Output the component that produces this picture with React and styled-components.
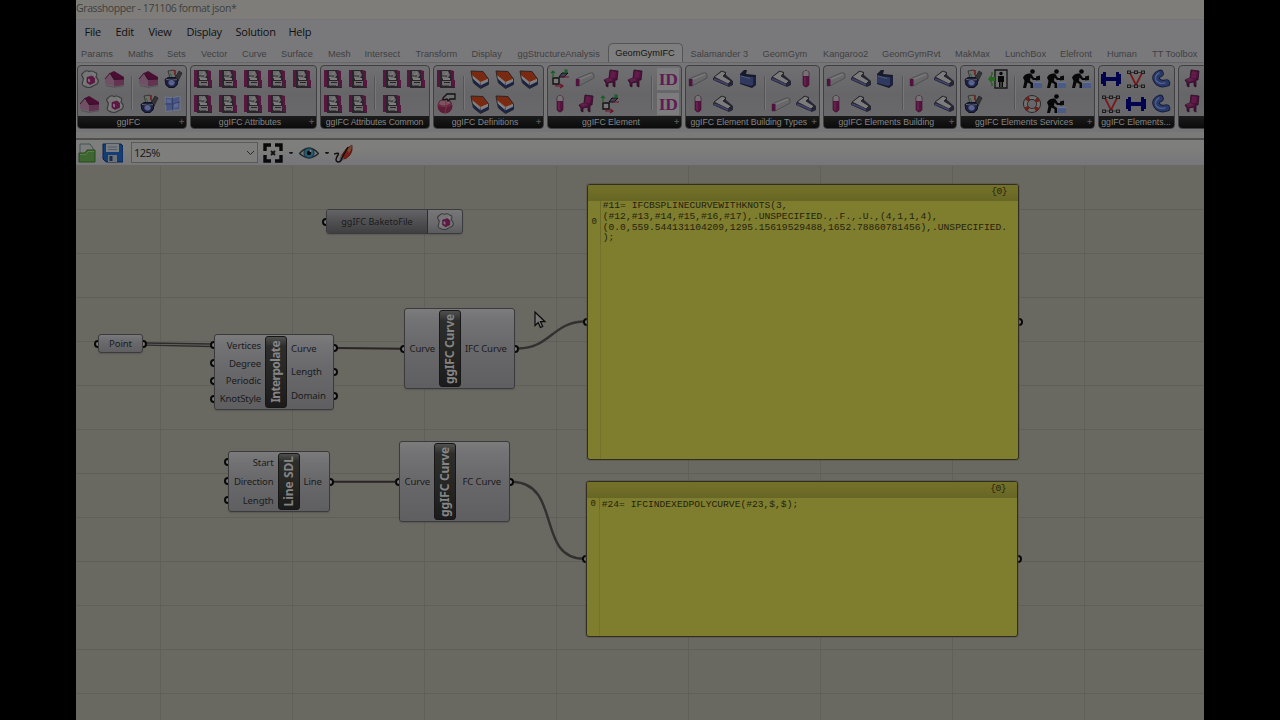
import React from "react";
import styled, { createGlobalStyle } from "styled-components";

const GlobalStyle = createGlobalStyle`
  * { box-sizing: border-box; }
  html, body { margin: 0; padding: 0; background: #000; }
  body { width: 1280px; height: 720px; overflow: hidden; }
`;

/* ---------- window chrome ---------- */
const Screen = styled.div`
  width: 1280px; height: 720px; background: #000; display: flex; justify-content: center; overflow: hidden;
`;
const Window = styled.div`
  width: 1128px; height: 720px; display: flex; flex-direction: column; overflow: hidden; background: #78787a;
`;
const TitleBar = styled.div`
  height: 20px; flex: none; background: #7e7d79; border-bottom: 1px solid #747477; color: #3f3f3f;
  font: 10.5px/17px "Open Sans", sans-serif; letter-spacing: -0.4px; white-space: nowrap;
`;
const MenuBar = styled.div`
  height: 23px; flex: none; display: flex; align-items: center; padding-left: 8.5px; background: #79797b;
`;
const MenuItem = styled.span`
  width: ${(p) => p.$w}px; flex: none; white-space: nowrap; color: #101010;
  font: 11px/21px "Open Sans", sans-serif; letter-spacing: -0.25px;
`;
const TabStrip = styled.div`
  height: 20px; flex: none; display: flex; align-items: stretch; padding-left: 5px; background: #79797b;
  white-space: nowrap; overflow: hidden; border-bottom: 1px solid #676769;
`;
const Tab = styled.span`
  width: ${(p) => p.$w}px; flex: none; color: #404042; font: 9.25px/22px "Liberation Sans", sans-serif;
`;
const ActiveTab = styled.span`
  width: 75px; flex: none; margin-right: 8px; text-align: center; color: #141414; background: #7e7e7e;
  border: 1px solid #555557; border-bottom: 0; border-radius: 5px 5px 0 0;
  font: 9.25px/18px "Liberation Sans", sans-serif;
`;
const Ribbon = styled.div`
  height: 69px; flex: none; display: flex; align-items: flex-start; gap: 3px; padding: 2px 0 0 1px;
  background: #757577; overflow: hidden;
`;
const Group = styled.section`
  width: ${(p) => p.$w}px; height: 64px; flex: none; display: flex; flex-direction: column; overflow: hidden;
  border: 1px solid #3f3f41; border-radius: 4px; background: linear-gradient(#707072, #666668 45%, #6b6b6d);
  box-shadow: 0 0 0 1px #7c7c7e66;
`;
const GroupBody = styled.div`
  flex: 1; display: flex; padding-top: 1px;
`;
const IconGrid = styled.div`
  display: grid; grid-template-columns: repeat(${(p) => p.$cols}, 24.7px); grid-template-rows: 24.5px 24.5px;
  place-items: center; flex: none;
`;
const Divider = styled.i`
  width: 1px; height: 34px; margin: 9px 4px 0; flex: none; background: #555558; box-shadow: 1px 0 #777779;
`;
const GroupLabel = styled.div`
  height: 12px; flex: none; display: flex; align-items: center; padding-right: 1px; background: linear-gradient(#1c1c1c, #0b0b0b);
  color: #858585; font: 8.7px/11px "Liberation Sans", sans-serif; white-space: nowrap;
`;
const LabelText = styled.span`
  flex: 1; text-align: center; letter-spacing: ${(p) => p.$ls || 0}px;
`;
const Plus = styled.span`
  flex: none; color: #555; font-weight: bold; font-size: 9px; width: 6px;
`;
const RibbonFoot = styled.div`
  height: 8px; flex: none; background: #7a7a79; border-bottom: 2px solid #505050;
`;
const ToolBar = styled.div`
  height: 26px; flex: none; display: flex; align-items: center; background: linear-gradient(#7e7e7c 35%, #79797b 75%, #777779);
  border-bottom: 1px solid #696864;
`;
const Tool = styled.span`
  width: ${(p) => p.$w}px; height: 20px; flex: none; display: flex; align-items: center; margin-left: ${(p) => p.$ml || 0}px;
`;
const Zoom = styled.div`
  width: 127px; height: 21px; margin-left: 8px; flex: none; display: flex; align-items: center; justify-content: space-between;
  padding: 0 2px; border: 1px solid #5a5a5a; background: #7e7e7d; color: #151515;
  font: 11px/18px "Open Sans", sans-serif; letter-spacing: -0.5px;
`;
const Dot = styled.i`
  width: 4px; height: 2px; margin-left: ${(p) => p.$ml}px; flex: none; background: #151515; border-radius: 0 0 2px 2px;
`;

/* ---------- canvas ---------- */
const Canvas = styled.main`
  position: relative; flex: 1; overflow: hidden; background-color: #696962;
  background-image: linear-gradient(90deg, #605f59 1px, transparent 1px), linear-gradient(#625f5a 1px, transparent 1px);
  background-size: 132px 132px, 132px 44px; background-position: 84px 0, 0 43px;
`;
const Wires = styled.svg`
  position: absolute; left: 0; top: 0; width: 1128px; height: 554px; pointer-events: none;
`;
const Placed = styled.div`
  position: absolute; left: ${(p) => p.$x}px; top: ${(p) => p.$y}px; width: ${(p) => p.$w}px; height: ${(p) => p.$h}px;
`;
const Port = styled.i`
  position: absolute; ${(p) => (p.$side === "in" ? "left: -4px" : "right: -4px")}; top: ${(p) => p.$y - 4}px;
  width: 8px; height: 8px; border: 2px solid #080808; border-radius: 50%; background: #7c7c7c;
`;
const Body = styled.div`
  position: relative; width: 100%; height: 100%; display: flex; border: 1px solid #3b3a3d; border-radius: 3px;
  padding: 1px; background: linear-gradient(#7c7c7c, #747477 12%, #69696c 45%, #5f5f62);
  box-shadow: 0 1px 1px #45444066; color: #1b1b1b; font: 9.6px/12px "Noto Sans", "Open Sans", sans-serif;
`;
const PortLabels = styled.div`
  width: ${(p) => p.$w}px; flex: none; display: flex; flex-direction: column; justify-content: space-around;
  align-items: ${(p) => (p.$out ? "flex-start" : "flex-end")}; padding: 1px 4px 0 ${(p) => p.$inset || 4}px; white-space: nowrap;
  letter-spacing: -0.15px;
`;
const NameBar = styled.div`
  width: 22px; flex: none; display: flex; align-items: center; justify-content: center; overflow: hidden;
  border: 1px solid #171717; border-radius: 3px; background: linear-gradient(#50504e, #2d2d2c 13%, #252524 60%, #1b1b1b);
  color: #858585;
`;
const NameText = styled.span`
  writing-mode: vertical-rl; transform: rotate(180deg); white-space: nowrap; letter-spacing: ${(p) => p.$ls || 0}px;
  font: bold 12px/18px "Noto Sans", "Open Sans", sans-serif;
`;
const Caption = styled.span`
  flex: 1; align-self: center; text-align: center; letter-spacing: -0.1px;
`;
const BakeBody = styled(Body)`
  padding: 0; overflow: hidden; background: linear-gradient(#77777a, #6a6a6d 60%, #5b5b5e);
`;
const BakeName = styled.div`
  width: 101px; flex: none; border-right: 1px solid #2c2c2e; background: linear-gradient(#646466, #525255 45%, #3f3f42);
  text-align: center; font-size: 9.1px; line-height: 23px;
`;
const BakeIcon = styled.div`
  flex: 1; display: flex; align-items: center; justify-content: center;
`;
const Note = styled.article`
  position: relative; width: 100%; height: 100%; display: flex; flex-direction: column;
  border: 1px solid #302e22; border-radius: 3px; background: #7f7d2e; box-shadow: 0 0 0 1px #4c4b3b66;
  font: 9.63px/10.75px "Liberation Mono", monospace; color: #24230d;
`;
const NoteHead = styled.header`
  height: 16px; flex: none; background: linear-gradient(#747229, #686625); text-align: right; padding: 1px 11px 0 0; line-height: 12px;
  letter-spacing: -0.5px; border-radius: 2px 2px 0 0;
`;
const NoteRow = styled.div`
  display: flex; padding-left: 3.5px;
`;
const Gutter = styled.span`
  width: 9.5px; flex: none; display: flex; align-items: center; border-right: 1px solid #6c6a29;
  font-size: 9px;
`;
const Data = styled.pre`
  margin: 0; padding: ${(p) => p.$pad}px 0 0 1.8px; font: inherit;
`;
const NoteRest = styled.div`
  flex: 1; margin-left: 12px; border-left: 1px solid #74722b;
`;
const Pointer = styled.svg`
  position: absolute; left: 458px; top: 145px; width: 12px; height: 18px;
`;

/* ---------- icons ---------- */
const P = "#551640";
const art = {
  egg: (
    <>
      <path d="M3 4Q6 .5 9 2.500Q12 1 15 3.500Q18 4 16 8Q20 12 17 15Q15 16 13 17Q9 20 4 17Q1 16 3 12Q4 9 2 7Q1 5 3 4Z" fill="#767677" stroke="#3a3a3c" strokeWidth="1.100" />
      <path d="M5 15q-1-3 1-6M13 4q2 2 1 4" stroke="#848485" fill="none" />
      <path d="M7 8.500l5-1.500 2.500 2v4.500L10 15.500l-3-2z" fill="#5f1843" stroke="#4b1238" strokeWidth=".7" />
      <path d="M8 9.500l2 1v3l-2-1z" fill="#856a7e" />
    </>
  ),
  house: (
    <>
      <path d="M0 10L5 4 9 10v7L0 15z" fill="#705065" />
      <path d="M5 4l4-2 10 6v3l-10 0z" fill="#4a0e32" />
      <path d="M9 10.500L19 10v6L9 17.500z" fill="#633451" />
      <path d="M0 10l5-6 4 6.500 10-.5" stroke="#350b27" strokeWidth=".9" fill="none" />
      <path d="M1 16.500l8 1.800 10-1.500" stroke="#4c4c4e" strokeWidth=".8" fill="none" />
    </>
  ),
  pot: (
    <>
      <path d="M5 2l6-1 2 8H7z" fill="#6c6c6c" stroke="#292929" strokeWidth=".8" />
      <path d="M12 9l4-7 3 2-4 8z" fill="#333438" stroke="#222" strokeWidth=".8" />
      <path d="M12 6V1" stroke="#7c2020" strokeWidth="1.600" />
      <path d="M7 4l2 4" stroke="#2d6a2c" strokeWidth="1" />
      <path d="M2 10.500L5 8.500h7l3 2.500-1 5-3 2.500H6L3 16z" fill="#1d2043" stroke="#10121f" strokeWidth="1" />
      <path d="M5.500 12.500l3-1.500 3.500 2-1 3-3 .8-2.500-1.800z" fill="#56628f" />
      <path d="M3 10.300q5 1.700 11 .3" stroke="#777" strokeWidth=".8" fill="none" />
    </>
  ),
  glass: (
    <>
      <path d="M2 3q8 2 15-1v14q-7-1-14 2z" fill="#4a5680" stroke="#6f7690" strokeWidth="1" />
      <path d="M9.500 3.500v13M2 10q8 1 15-2" stroke="#34406c" strokeWidth="1" fill="none" />
      <path d="M4 5l4 1v3l-4-.5zM11 10l4-1v4l-4 1z" fill="#5d6b92" />
    </>
  ),
  doc: (
    <>
      <path d="M1 1h6v17H1z" fill={P} />
      <path d="M5 1h10l2 4v6h2v8H4V1z" fill="#29252a" />
      <path d="M6 2h6l2 4-2 3H6z" fill="#6b6b6c" />
      <path d="M6 8l5-5 1 1-5 6zM7 9h7v2H7z" fill="#7d7d7d" />
      <path d="M14 1l4 1v9h-2z" fill={P} />
      <path d="M6 12h9v5H8l-2-1z" fill="#6c6c6d" />
      <path d="M8 13.500h6M8 17h5M6 7h5" stroke="#262626" strokeWidth="1" />
      <path d="M15 11h4v7h-3z" fill={P} />
    </>
  ),
  sphere: (
    <>
      <circle cx="9" cy="12" r="7.500" fill="#5c1d38" />
      <path d="M2.500 10q2.500-5 7.500-5l5 4q-6 5-12.500 1z" fill="#7b5465" />
      <path d="M2 11q7 4 14-1M9 5q3 7 0 14" stroke="#743540" fill="none" />
      <path d="M7 4l4-4h8v5h-5l-2 2-1-2-4 1z" fill="#6c6c6c" stroke="#121212" strokeWidth="1.300" />
    </>
  ),
  wedge: (
    <>
      <path d="M1 2L13 2.500 18.500 10 10 13.500 2 7z" fill="#7a2a10" />
      <path d="M2 6l8.500 7 8-3.500v3l-8 4L2.500 10z" fill="#808080" />
      <path d="M2.500 9.500l8 7 8-4v3L10.500 19.500 3.500 14z" fill="#16234a" />
      <path d="M1 2L13 2.500 18.500 10v5.500l-8 4-7-5.500L2 8z" fill="none" stroke="#272024" strokeWidth=".9" />
      <path d="M10.300 13.500v5.500" stroke="#3c2830" strokeWidth=".7" />
    </>
  ),
  frame: (
    <>
      <path d="M3 9h6v6H3z" fill="#777" stroke="#111" strokeWidth="1.400" />
      <path d="M9 8l3-4h6l-4 4z" fill="#3c4258" stroke="#111" />
      <path d="M3 9V2M1 4l2-2 2 2M14 4l3-3M14 1h3v3" stroke="#195e25" strokeWidth="1.200" fill="none" />
      <path d="M12 8h7M6 15v2h6M10 15l3 2-3 2" stroke="#6b1228" strokeWidth="1.200" fill="none" />
    </>
  ),
  beam: (
    <>
      <path d="M1 10L15 4q4-1 4 2v3L4 17H1z" fill="#68686a" stroke="#4a4a4c" strokeWidth=".8" />
      <path d="M4 10.500L17 5.200" stroke="#79797a" strokeWidth="1.600" />
      <path d="M1 10h3.500v7H1z" fill="#521240" />
    </>
  ),
  column: (
    <>
      <path d="M7 3q3-3 6 0v13q-3 4-6 0z" fill="#571240" stroke="#3e1730" strokeWidth=".7" />
      <path d="M7.300 3q2.700-2.500 5.400 0v4H7.300z" fill="#747475" />
      <path d="M9 8v8" stroke="#702a55" strokeWidth="1.200" />
    </>
  ),
  chair: (
    <>
      <path d="M10 1l8 1-1 9h-2v7l-2-1v-4l-5 1v4l-2-1v-3l-2-3 5-2z" fill="#4d123b" stroke="#2b0c23" strokeWidth=".8" />
      <path d="M11 2l5 1-1 6h-5z" fill="#611a4a" />
      <path d="M4.500 10l5-1 4 2-6 2z" fill="#5e2149" />
    </>
  ),
  slab: (
    <>
      <path d="M0 9L8 2l5 1v3l7 6v4l-4 2-7-3-9-4z" fill="#242638" />
      <path d="M1 8l8-6 4 2-3 3 8 5-3 3-6-3z" fill="#7c7c7c" stroke="#222" strokeWidth=".9" />
      <path d="M1 10l8 3 6 3" stroke="#43436c" strokeWidth="1.500" fill="none" />
    </>
  ),
  wall: (
    <>
      <path d="M2 5l4-4h3l-1 4 10 1v10L14 19 2 15z" fill="#171a28" />
      <path d="M2 6l5 1.500 8 .5v8L13 17 2 14z" fill="#303960" />
      <path d="M15 8l3-1v9l-3 1z" fill="#1b2140" />
      <path d="M3 7l9 2.500" stroke="#505a7b" />
    </>
  ),
  exit: (
    <>
      <path d="M7 1h12v18H7z" fill="#6f6f6f" stroke="#151515" strokeWidth="1.300" />
      <circle cx="13" cy="4.500" r="1.700" fill="#080808" />
      <path d="M10 7h6v6h-1v5h-1.500v-5h-1v5H11v-5h-1z" fill="#080808" />
      <path d="M0 10l4-5v3h3v4H4v3z" fill="#266820" />
      <path d="M4 3v3M4 14v3" stroke="#266820" strokeWidth="1.500" />
    </>
  ),
  worker: (
    <>
      <circle cx="10.500" cy="2.500" r="2.300" fill="#050505" />
      <path d="M1 8.500Q3 4 9 4.500L12 9h4v2h-5L8.500 8.500 8 12l3 2v5H8.500v-4L5.500 13.500 4 19H1l1.500-7z" fill="#080808" />
      <path d="M12 13h8v6h-9v-3h1z" fill="#4b5b83" />
      <path d="M14 7.500l4-1V11l-4 .5z" fill="#0b0b0b" />
      <path d="M12 13.500h8" stroke="#68769a" />
    </>
  ),
  buoy: (
    <>
      <circle cx="10" cy="10" r="6.500" fill="none" stroke="#262626" strokeWidth="5" />
      <circle cx="10" cy="10" r="6.500" fill="none" stroke="#707070" strokeWidth="3.200" />
      <circle cx="10" cy="10" r="6.500" fill="none" stroke="#6c2019" strokeWidth="4" strokeDasharray="3.500 6.710" strokeDashoffset="-3.350" />
    </>
  ),
  dumbbell: <path d="M0 5h2V3h3v5h10V3h3v2h2v10h-2v2h-3v-5H5v5H2v-2H0z" fill="#02034f" />,
  truss: (
    <>
      <path d="M3 3.500h14M4 17h13" stroke="#333" strokeWidth="1" />
      <path d="M4 4l6 12 6-12" stroke="#7b1719" strokeWidth="1.700" fill="none" />
      {[[3, 2], [10, 2], [17, 2], [3, 16], [10, 16], [17, 16]].map(([x, y]) => (
        <rect key={`${x}-${y}`} x={x - 1.5} y={y} width="3" height="2.500" fill="#666" stroke="#1c1c1c" strokeWidth="1" />
      ))}
    </>
  ),
  elbow: (
    <>
      <path d="M9 4.500Q3 7 6 11.500 9 16 15.500 14" stroke="#101a3a" strokeWidth="7.500" strokeLinecap="round" fill="none" />
      <path d="M9 4.500Q3 7 6 11.500 9 16 15.500 14" stroke="#293866" strokeWidth="5.800" strokeLinecap="round" fill="none" />
      <path d="M8 4Q3 7 5 11.500 8 15.500 14 14" stroke="#4c5c86" strokeWidth="1.500" strokeLinecap="round" fill="none" />
    </>
  ),
};

const IdBadge = styled.span`
  width: 22px; height: 22px; display: flex; align-items: center; justify-content: center; background: #7c7c7d;
  color: #5f1c55; font: bold 17.500px/22px "Liberation Serif", serif; letter-spacing: -0.4px;
`;
const IconSvg = styled.svg`
  width: ${(p) => p.$size}px; height: ${(p) => p.$size}px; overflow: visible;
`;
const Glyph = ({ name, size = 20 }) =>
  name === "id" ? <IdBadge>ID</IdBadge> : <IconSvg $size={size} viewBox="0 0 20 20">{art[name]}</IconSvg>;

const menu = [["File", 31], ["Edit", 33], ["View", 38], ["Display", 49], ["Solution", 53], ["Help", 40]];
const tabsBefore = [
  ["Params", 47], ["Maths", 39], ["Sets", 34], ["Vector", 41], ["Curve", 39], ["Surface", 47], ["Mesh", 36.5],
  ["Intersect", 51], ["Transform", 56], ["Display", 46], ["ggStructureAnalysis", 90],
];
const tabsAfter = [
  ["Salamander 3", 72], ["GeomGym", 60.5], ["Kangaroo2", 59], ["GeomGymRvt", 73], ["MakMax", 50], ["LunchBox", 55],
  ["Elefront", 47], ["Human", 45], ["TT Toolbox", 52],
];
const fill = (n, name) => Array(n).fill(name);
const groups = [
  { w: 110, label: "ggIFC", plus: true, sets: [[2, ["egg", "house", "house", "egg"]], [2, ["house", "pot", "pot", "glass"]]] },
  { w: 127, label: "ggIFC Attributes", plus: true, sets: [[5, fill(9, "doc")]] },
  { w: 110, label: "ggIFC Attributes Common", spacing: -0.1, sets: [[2, fill(4, "doc")], [2, fill(3, "doc")]] },
  { w: 111, label: "ggIFC Definitions", plus: true, sets: [[1, ["doc", "sphere"]], [3, fill(5, "wedge")]] },
  { w: 135, label: "ggIFC Element", plus: true, sets: [[4, ["frame", "beam", "chair", "chair", "column", "chair", "frame"]], [1, ["id", "id"]]] },
  { w: 134.5, label: "ggIFC Element Building Types", plus: true, sets: [[3, ["beam", "slab", "wall", "column", "slab"]], [2, ["slab", "column", "beam", "slab"]]] },
  { w: 134.5, label: "ggIFC Elements Building", plus: true, sets: [[3, ["beam", "slab", "wall", "column", "slab"]], [2, ["beam", "slab", "column", "slab"]]] },
  { w: 135, label: "ggIFC Elements Services", plus: true, sets: [[2, ["pot", "exit", "pot"]], [3, ["worker", "worker", "worker", "buoy", "worker"]]] },
  { w: 77, label: "ggIFC Elements...", sets: [[3, ["dumbbell", "truss", "elbow", "truss", "dumbbell", "elbow"]]] },
  { w: 77, label: "", sets: [[1, ["chair", "chair"]]] },
];

function RibbonGroup({ w, label, spacing, plus, sets }) {
  return (
    <Group $w={w}>
      <GroupBody>
        {sets.map(([cols, icons], i) => (
          <React.Fragment key={i}>
            {i > 0 && <Divider />}
            <IconGrid $cols={cols}>{icons.map((name, k) => <Glyph key={k} name={name} />)}</IconGrid>
          </React.Fragment>
        ))}
      </GroupBody>
      <GroupLabel><LabelText $ls={spacing}>{label}</LabelText>{plus && <Plus>+</Plus>}</GroupLabel>
    </Group>
  );
}

function Component({ x, y, w, h, inputs, inPorts, outputs, outPorts, name, nameSpacing, inW, outW, outInset }) {
  return (
    <Placed $x={x} $y={y} $w={w} $h={h}>
      {inPorts.map((p) => <Port key={p} $side="in" $y={p} />)}
      {outPorts.map((p) => <Port key={p} $side="out" $y={p} />)}
      <Body>
        <PortLabels $w={inW}>{inputs.map((t) => <span key={t}>{t}</span>)}</PortLabels>
        <NameBar><NameText $ls={nameSpacing}>{name}</NameText></NameBar>
        <PortLabels $out $w={outW} $inset={outInset}>{outputs.map((t) => <span key={t}>{t}</span>)}</PortLabels>
      </Body>
    </Placed>
  );
}

function DataNote({ x, y, w, h, lines, portY, pad = 0 }) {
  return (
    <Placed $x={x} $y={y} $w={w} $h={h}>
      <Port $side="in" $y={portY} />
      <Port $side="out" $y={portY} />
      <Note>
        <NoteHead>{"{0}"}</NoteHead>
        <NoteRow>
          <Gutter>0</Gutter>
          <Data $pad={pad}>{lines.join("\n")}</Data>
        </NoteRow>
        <NoteRest />
      </Note>
    </Placed>
  );
}

export default function App() {
  return (
    <Screen>
      <GlobalStyle />
      <Window>
        <TitleBar>Grasshopper - 171106 format json*</TitleBar>
        <MenuBar>{menu.map(([t, w]) => <MenuItem key={t} $w={w}>{t}</MenuItem>)}</MenuBar>
        <TabStrip>
          {tabsBefore.map(([t, w]) => <Tab key={t} $w={w}>{t}</Tab>)}
          <ActiveTab>GeomGymIFC</ActiveTab>
          {tabsAfter.map(([t, w]) => <Tab key={t} $w={w}>{t}</Tab>)}
        </TabStrip>
        <Ribbon>{groups.map((g, i) => <RibbonGroup key={i} {...g} />)}</Ribbon>
        <RibbonFoot />
        <ToolBar>
          <Tool $w={18} $ml={2}>
            <svg width="18" height="20" viewBox="0 0 18 20">
              <path d="M2 1h10l3 4v6H2z" fill="#7d7d7d" stroke="#3f5555" />
              <path d="M1 10h6l2-3h8v12H1z" fill="#3d6630" stroke="#264a1d" />
              <path d="M2 11.500h6l2-3h6" stroke="#5a7d47" fill="none" />
            </svg>
          </Tool>
          <Tool $w={21} $ml={6}>
            <svg width="21" height="20" viewBox="0 0 21 20">
              <path d="M1 1h18l2 2v16H4l-3-3z" fill="#143c75" stroke="#0a254d" />
              <path d="M4 1h13v8H4z" fill="#7a7d80" />
              <path d="M6 4h9M6 6.500h9" stroke="#555c64" />
              <path d="M6 12h9v7H6z" fill="#6f7275" /><path d="M7.500 13h3v5h-3z" fill="#182d4c" />
            </svg>
          </Tool>
          <Zoom>
            125%
            <svg width="9" height="6" viewBox="0 0 9 6"><path d="M1 1l3.500 3.500L8 1" fill="none" stroke="#292929" strokeWidth="1" /></svg>
          </Zoom>
          <Tool $w={20} $ml={5}>
            <svg width="20" height="20" viewBox="0 0 20 20">
              <path d="M8 2H2v6M12 2h6v6M8 18H2v-6M12 18h6v-6" fill="none" stroke="#090909" strokeWidth="3.400" />
              <path d="M8 8l4 4m0-4l-4 4" stroke="#111" strokeWidth="1.800" />
            </svg>
          </Tool>
          <Dot $ml={6} />
          <Tool $w={20} $ml={5.5}>
            <svg width="20" height="16" viewBox="0 0 20 16">
              <path d="M.5 8.500Q10-2 19.500 8.500 10 17 .5 8.500z" fill="#757575" stroke="#1b2629" strokeWidth="1.300" />
              <circle cx="10" cy="8" r="5" fill="#285b70" stroke="#173541" /><circle cx="10" cy="8" r="2.200" fill="#070b0d" />
              <circle cx="11.500" cy="6" r="1" fill="#858585" />
            </svg>
          </Tool>
          <Dot $ml={6} />
          <Tool $w={20} $ml={5}>
            <svg width="20" height="20" viewBox="0 0 20 20">
              <path d="M7 13L12 6 18 2q1 6-2 10-4 5-8 4z" fill="#7a1d16" stroke="#35120f" strokeWidth=".6" />
              <path d="M13 7l5-5q0 4-3 8z" fill="#7b4a2e" />
              <path d="M7 12l3 3-2 3-3-2z" fill="#555" />
              <path d="M0 11q6-2 4 1-4 6 0 7 3 0 4-4L14 4" stroke="#151010" strokeWidth="1.500" fill="none" />
            </svg>
          </Tool>
        </ToolBar>
        <Canvas>
          <Wires viewBox="76 166 1128 554" fill="none">
            <path d="M146 343L212 344M146 345.200L212 346.500" stroke="#2f2b2c" strokeWidth="1.300" />
            <path d="M337 348L402 348.700M333 481.700H397" stroke="#2a2426" strokeWidth="1.900" />
            <path d="M518 348.500C550 348.500 553 321.500 585 321.500M513 481.800C562 484 536 558.500 584 558.700" stroke="#333030" strokeWidth="2.400" />
          </Wires>
          <Placed $x={250} $y={43} $w={137} $h={25}>
            <Port $side="in" $y={13} />
            <BakeBody>
              <BakeName>ggIFC BaketoFile</BakeName>
              <BakeIcon><Glyph name="egg" size={19} /></BakeIcon>
            </BakeBody>
          </Placed>
          <Placed $x={22} $y={168} $w={45} $h={19}>
            <Port $side="in" $y={10} />
            <Port $side="out" $y={10} />
            <Body><Caption>Point</Caption></Body>
          </Placed>
          <Component x={138} y={168} w={120} h={76} inW={49} outW={47} name="Interpolate" nameSpacing={-0.6}
            inputs={["Vertices", "Degree", "Periodic", "KnotStyle"]} inPorts={[11, 29, 47, 65]}
            outputs={["Curve", "Length", "Domain"]} outPorts={[14, 38, 62]} />
          <Component x={152} y={285} w={102} h={61} inW={47.5} outW={28} name="Line SDL"
            inputs={["Start", "Direction", "Length"]} inPorts={[11, 30, 49]} outputs={["Line"]} outPorts={[31]} />
          <Component x={328} y={142} w={111} h={81} inW={33} outW={51} name="ggIFC Curve" nameSpacing={-0.2}
            inputs={["Curve"]} inPorts={[41]} outputs={["IFC Curve"]} outPorts={[41]} />
          <Component x={323} y={275} w={111} h={81} inW={33} outW={51} name="ggIFC Curve" nameSpacing={-0.2}
            inputs={["Curve"]} inPorts={[41]} outputs={["FC Curve"]} outPorts={[41]} outInset={6.5} />
          <DataNote x={511} y={18} w={432} h={276} portY={138}
            lines={[
              "#11= IFCBSPLINECURVEWITHKNOTS(3,",
              "(#12,#13,#14,#15,#16,#17),.UNSPECIFIED.,.F.,.U.,(4,1,1,4),",
              "(0.0,559.544131104209,1295.15619529488,1652.78860781456),.UNSPECIFIED.",
              ");",
            ]} />
          <DataNote x={510} y={315} w={432} h={156} portY={78} pad={1.5} lines={["#24= IFCINDEXEDPOLYCURVE(#23,$,$);"]} />
          <Pointer viewBox="0 0 12 18">
            <path d="M1 1v13.500l3.200-3 2.200 5 2.300-1-2.200-4.800H11z" fill="#777" stroke="#0b0b0b" strokeWidth="1.200" />
          </Pointer>
        </Canvas>
      </Window>
    </Screen>
  );
}
